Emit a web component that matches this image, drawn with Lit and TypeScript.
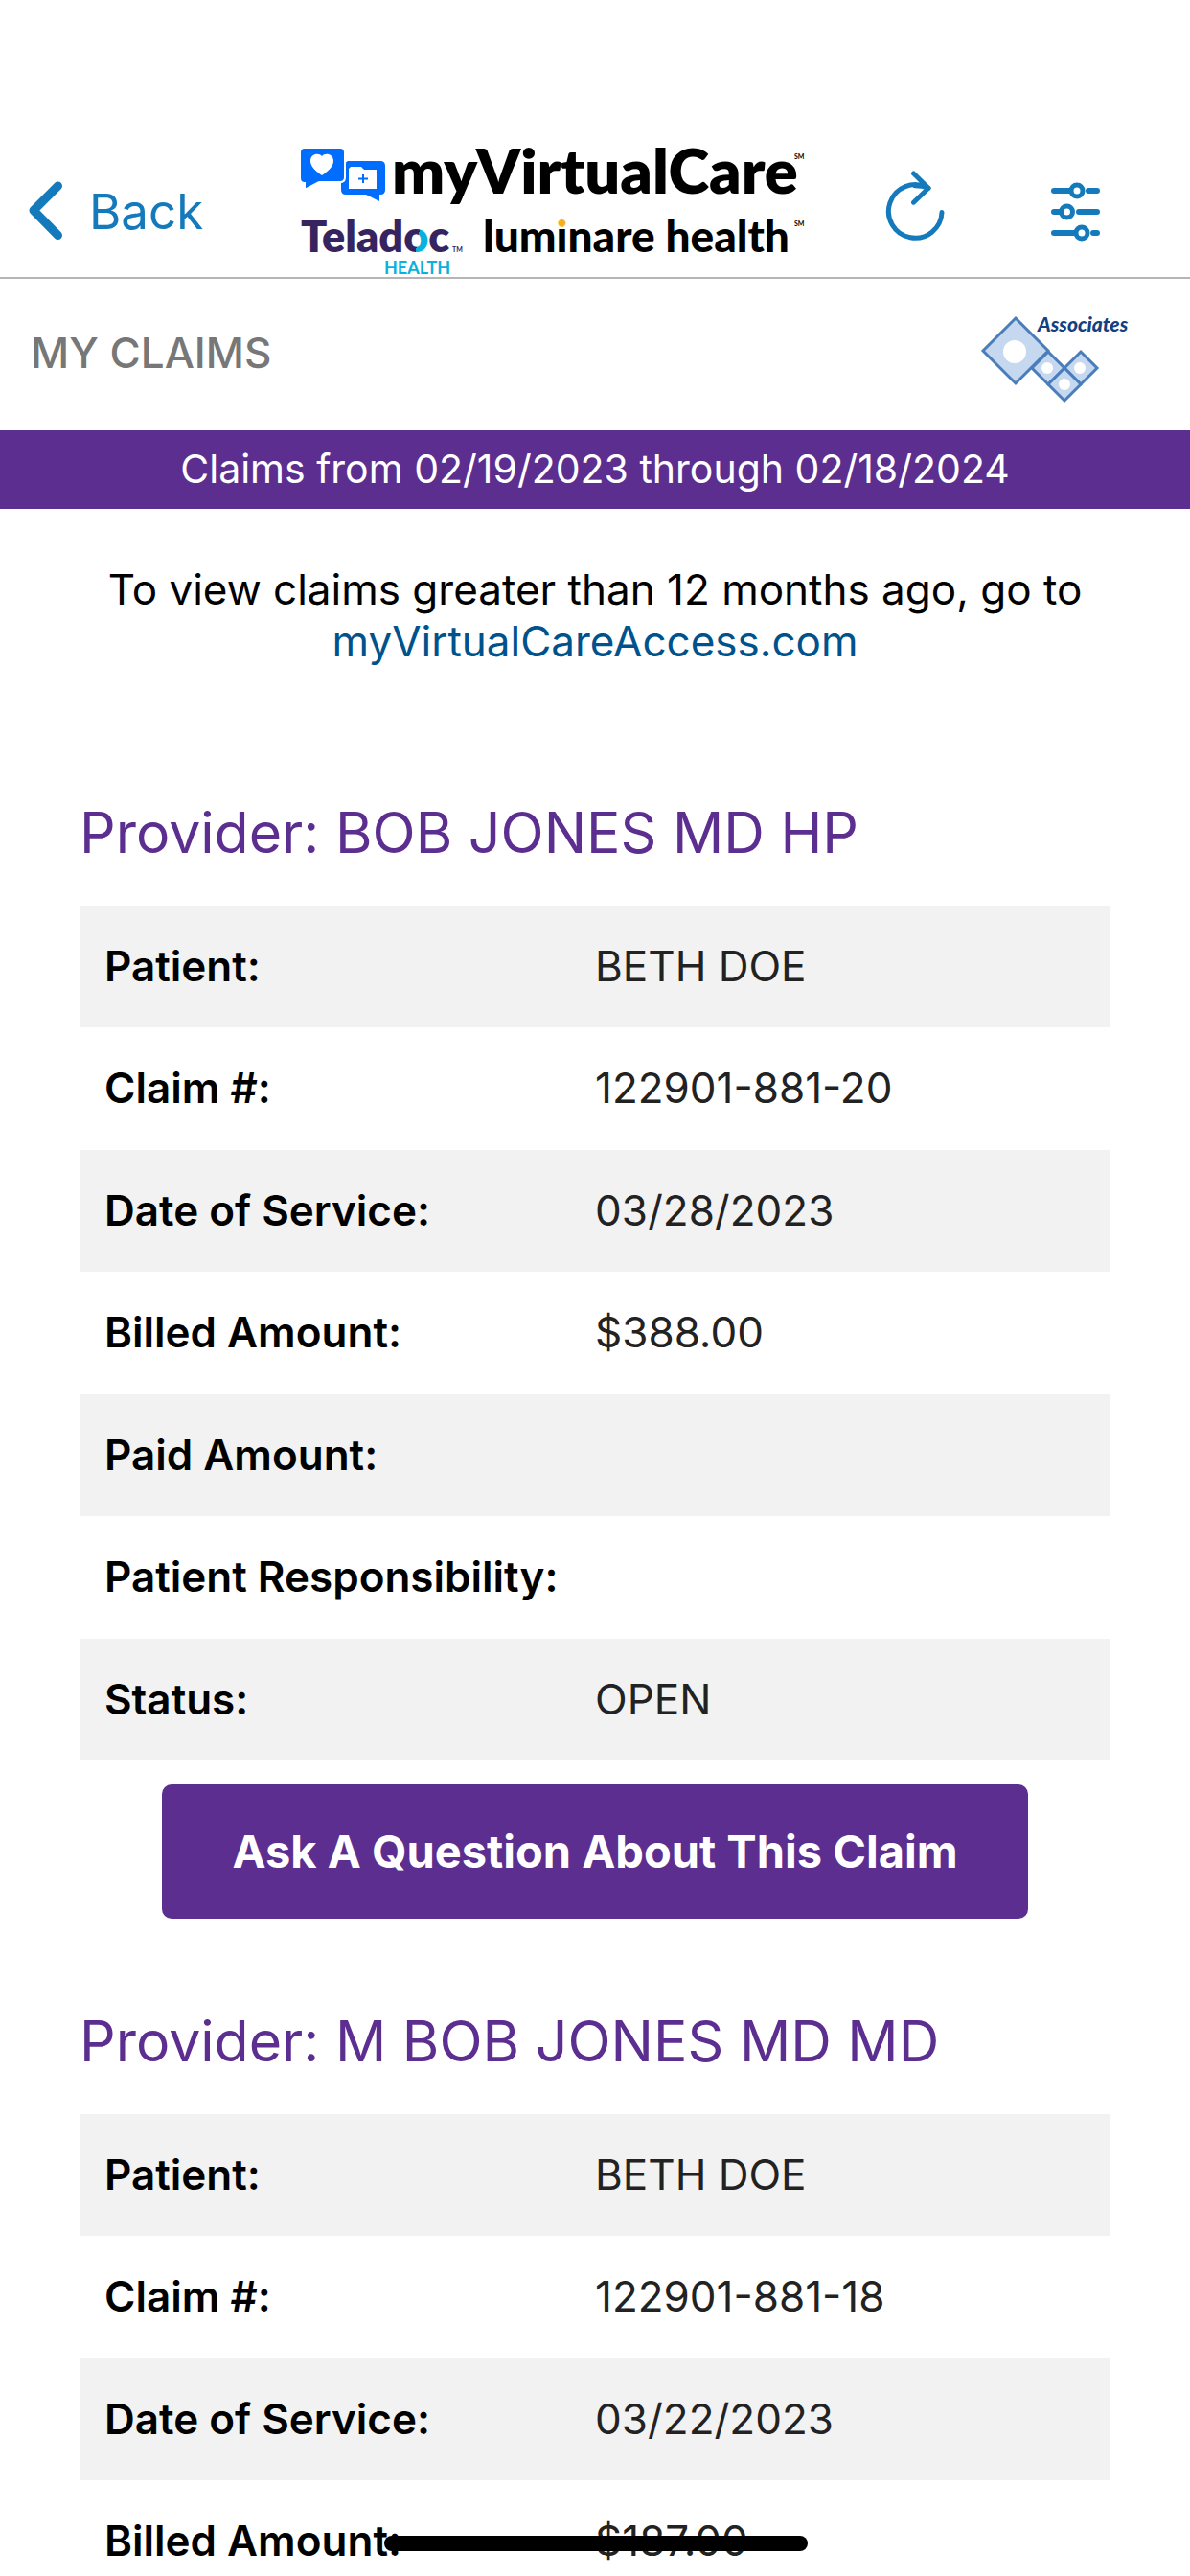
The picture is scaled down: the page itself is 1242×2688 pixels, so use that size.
import { LitElement, html, css, svg } from "lit";
import { customElement, property } from "lit/decorators.js";

interface Claim {
  provider: string;
  rows: [string, string][];
  action: boolean;
}

const CLAIMS: Claim[] = [
  {
    provider: "BOB JONES MD HP",
    rows: [
      ["Patient:", "BETH DOE"],
      ["Claim #:", "122901-881-20"],
      ["Date of Service:", "03/28/2023"],
      ["Billed Amount:", "$388.00"],
      ["Paid Amount:", ""],
      ["Patient Responsibility:", ""],
      ["Status:", "OPEN"],
    ],
    action: true,
  },
  {
    provider: "M BOB JONES MD MD",
    rows: [
      ["Patient:", "BETH DOE"],
      ["Claim #:", "122901-881-18"],
      ["Date of Service:", "03/22/2023"],
      ["Billed Amount:", "$187.00"],
    ],
    action: false,
  },
];

@customElement("brand-logo")
class BrandLogo extends LitElement {
  static styles = css`
    :host { display: block; }
    .logo { display: block; overflow: visible; font-family: Lato, "Liberation Sans", sans-serif; }
    .name { font-size: 65px; font-weight: 800; }
    .teladoc { font-size: 45px; font-weight: 800; fill: #35245f; }
    .health { font-size: 18px; font-weight: 700; fill: #0ab1dc; }
    .luminare { font-size: 46px; font-weight: 900; }
    .mark { font-size: 7px; font-weight: 700; }
  `;

  render() {
    return html`
      <svg class="logo" width="526" height="134" viewBox="0 0 526 134" role="img" aria-label="myVirtualCare">
        <defs>
          <linearGradient id="ring" gradientUnits="userSpaceOnUse" x1="120" y1="96" x2="126" y2="97">
            <stop offset="0.5" stop-color="#35245f" />
            <stop offset="0.5" stop-color="#0ab1dc" />
          </linearGradient>
          <linearGradient id="dot" gradientUnits="userSpaceOnUse" x1="0" y1="82" x2="0" y2="84">
            <stop offset="0.5" stop-color="#fbaf17" />
            <stop offset="0.5" stop-color="#000" />
          </linearGradient>
        </defs>
        <path fill="#006dff" d="M50 14h34q5 0 5 5v25q0 5-5 5h-1v7l-14-7H48q-5 0-5-5V19z" />
        <path fill="#006dff" stroke="#fff" stroke-width="2" d="M5 0h37q5 0 5 5v26q0 5-5 5H20L5 44v-7Q0 37 0 32V5Q0 0 5 0z" />
        <path fill="#fff" d="M23 29C17 25 11 20 11 14c0-8 9-9 12-5 3-4 12-3 12 5 0 6-6 11-12 15z" />
        <path fill="#fff" d="M53 20h11l3 3h13v20H51V22z" />
        <path stroke="#006dff" stroke-width="2" fill="none" d="M67 22h12M66 28v9M61 32.500h10" />
        <text class="name" x="96" y="48">myVirtualCare</text>
        <text class="mark" x="516" y="12">SM</text>
        <text class="teladoc" x="1" y="109">Telad<tspan fill="url(#ring)">o</tspan>c</text>
        <text class="mark" x="159" y="109" fill="#35245f">TM</text>
        <text class="health" x="88" y="132">HEALTH</text>
        <text class="luminare" x="191" y="109">lum<tspan fill="url(#dot)">i</tspan>nare health</text>
        <text class="mark" x="516" y="82">SM</text>
      </svg>
    `;
  }
}

@customElement("associates-logo")
class AssociatesLogo extends LitElement {
  static styles = css`
    :host { display: block; }
    .logo { display: block; overflow: visible; }
    .word { font: italic 900 21px Lato, "Liberation Sans", sans-serif; fill: #143f80; }
  `;

  render() {
    const tile = (x: number, y: number, r: number) =>
      svg`<path d="M${x} ${y - r}L${x + r} ${y}L${x} ${y + r}L${x - r} ${y}Z" />`;
    return html`
      <svg class="logo" width="156" height="92" viewBox="0 0 156 92" role="img" aria-label="Associates">
        <g fill="#c6d8f0" stroke="#4a7ebb" stroke-width="3">
          ${tile(36, 36, 34)} ${tile(70, 54, 17)} ${tile(104, 54, 17)} ${tile(87, 71, 17)}
        </g>
        <g fill="#fff">
          <circle cx="35" cy="37" r="12" />
          <circle cx="69" cy="54" r="6" />
          <circle cx="103" cy="54" r="6" />
          <circle cx="87" cy="71" r="6" />
        </g>
        <text class="word" x="59" y="16">Associates</text>
      </svg>
    `;
  }
}

@customElement("claim-card")
class ClaimCard extends LitElement {
  @property({ attribute: false }) claim!: Claim;

  static styles = css`
    :host { display: block; }
    .provider { margin: 0 0 38px; font-size: 59px; line-height: 76px; font-weight: 400; color: #5b2e90; }
    .rows { width: 100%; border-collapse: collapse; table-layout: fixed; font-size: 44px; line-height: 59px; }
    .label, .value { padding: 34px 26px; text-align: left; }
    .label { font-weight: 600; color: #000; white-space: nowrap; }
    .value { padding-left: 0; font-weight: 400; color: #222; }
    .row:nth-child(odd) { background: #f2f2f2; }
    .row:nth-child(even) .label, .row:nth-child(even) .value { padding-bottom: 35px; }
    .ask {
      display: block; width: 84%; margin: 25px auto 0; padding: 40px 0; border: 0; border-radius: 10px;
      background: #5b2e90; color: #fff; font: 700 47px/60px Inter, "Liberation Sans", sans-serif;
    }
  `;

  render() {
    return html`
      <h2 class="provider">Provider: ${this.claim.provider}</h2>
      <table class="rows">
        <tbody>
          ${this.claim.rows.map(
            ([label, value]) => html`
              <tr class="row">
                <th class="label" scope="row">${label}</th>
                <td class="value">${value}</td>
              </tr>
            `
          )}
        </tbody>
      </table>
      ${this.claim.action ? html`<button class="ask" type="button">Ask A Question About This Claim</button>` : ""}
    `;
  }
}

@customElement("app-root")
class AppRoot extends LitElement {
  static styles = css`
    :host {
      display: flex; flex-direction: column; position: relative; height: 100vh; overflow: hidden;
      background: #fff; color: #000; font-family: Inter, "Liberation Sans", sans-serif;
    }
    .nav {
      display: flex; align-items: center; flex: none; padding: 154px 91px 1px 28px;
      border-bottom: 2px solid #b5b5b5;
    }
    .back {
      display: flex; align-items: center; gap: 25px; padding: 0; border: 0; background: none;
      color: #147abc; font: 400 51px/64px Inter, "Liberation Sans", sans-serif;
    }
    .brand { margin-left: 101px; }
    .actions { display: flex; align-items: center; gap: 108px; margin-left: auto; }
    .icon-button { padding: 0; border: 0; background: none; }
    .icon { display: block; fill: none; stroke: #147abc; stroke-linecap: round; stroke-linejoin: round; }
    .title-bar { display: flex; align-items: flex-start; justify-content: space-between; flex: none; padding: 39px 62px 27px 32px; }
    .title { margin: 0; font-size: 44px; line-height: 76px; font-weight: 500; color: #777; }
    .range { flex: none; margin: 0; padding: 11px 0 13px; background: #5b2e90; color: #fff; text-align: center; font-size: 41px; line-height: 58px; }
    .content { flex: 1; min-height: 0; overflow-y: auto; scrollbar-width: none; padding: 57px 83px 0; }
    .notice { margin: 0 0 135px; text-align: center; font-size: 44px; line-height: 54px; }
    .link { display: block; color: #00528c; text-decoration: none; }
    .claims { display: flex; flex-direction: column; gap: 90px; }
    .home-bar { position: absolute; left: 50%; bottom: 26px; width: 442px; height: 16px; margin-left: -220px; border-radius: 8px; background: #000; }
  `;

  render() {
    return html`
      <nav class="nav">
        <button class="back" type="button">
          <svg class="icon" width="40" height="64" viewBox="0 0 40 64" stroke-width="9" aria-hidden="true">
            <path d="M32.500 5L7 30.500l25.500 26" />
          </svg>
          Back
        </button>
        <brand-logo class="brand"></brand-logo>
        <div class="actions">
          <button class="icon-button" type="button" aria-label="Refresh">
            <svg class="icon" width="64" height="88" viewBox="0 0 64 88" stroke-width="5">
              <path d="M60 44.500A27.800 27.800 0 1 1 45 18.800M30.500 4L46 19.200 30.500 34.200" />
              <path d="M32 16.700Q40 16.700 46 19.200" />
            </svg>
          </button>
          <button class="icon-button" type="button" aria-label="Filter claims">
            <svg class="icon" width="56" height="64" viewBox="0 0 56 64" stroke-width="6">
              <path d="M5 10H22M41 10H50M5 32H11M31 32H50M5 54H27M46 54H50" />
              <g stroke-width="5">
                <circle cx="29" cy="10" r="6" />
                <circle cx="18.500" cy="32" r="6" />
                <circle cx="34" cy="54" r="6" />
              </g>
            </svg>
          </button>
        </div>
      </nav>
      <header class="title-bar">
        <h1 class="title">MY CLAIMS</h1>
        <associates-logo></associates-logo>
      </header>
      <p class="range">Claims from 02/19/2023 through 02/18/2024</p>
      <main class="content">
        <p class="notice">
          To view claims greater than 12 months ago, go to
          <a class="link" href="#access">myVirtualCareAccess.com</a>
        </p>
        <div class="claims">${CLAIMS.map((claim) => html`<claim-card .claim=${claim}></claim-card>`)}</div>
      </main>
      <div class="home-bar"></div>
    `;
  }
}
